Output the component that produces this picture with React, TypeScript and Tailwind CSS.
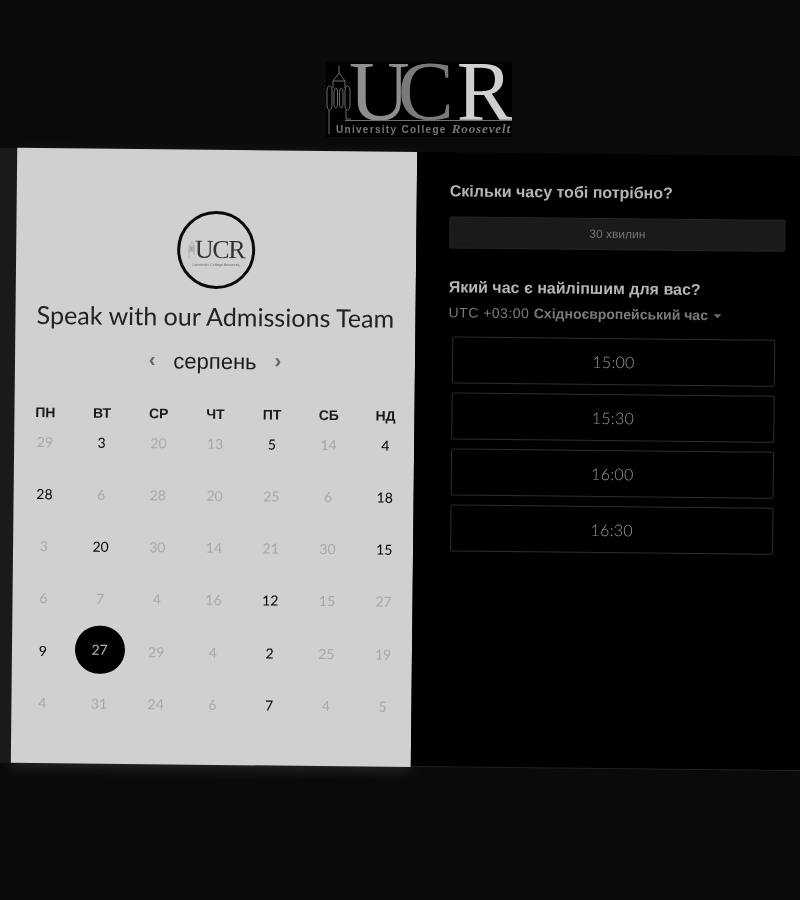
const weekDays = ['ПН', 'ВТ', 'СР', 'ЧТ', 'ПТ', 'СБ', 'НД'];

// [day, available]
const days: [number, boolean][][] = [
  [[29, false], [3, true], [20, false], [13, false], [5, true], [14, false], [4, true]],
  [[28, true], [6, false], [28, false], [20, false], [25, false], [6, false], [18, true]],
  [[3, false], [20, true], [30, false], [14, false], [21, false], [30, false], [15, true]],
  [[6, false], [7, false], [4, false], [16, false], [12, true], [15, false], [27, false]],
  [[9, true], [27, true], [29, false], [4, false], [2, true], [25, false], [19, false]],
  [[4, false], [31, false], [24, false], [6, false], [7, true], [4, false], [5, false]],
];

const slots = ['15:00', '15:30', '16:00', '16:30'];

function Tower({ className }: { className?: string }) {
  return (
    <svg viewBox="0 0 25 71" fill="none" stroke="currentColor" strokeWidth="1" className={className}>
      <path d="M13 2v7M13 9l-6 8v7M13 9l6 8v7M7 17h12" />
      <path d="M3.5 22C1.5 22 1 25 1 27v14c0 3 1 5 2.500 5S6 44 6 41V27c0-2-.5-5-2.500-5z" />
      <path d="M9.800 24C8.300 24 8 27 8 29v11c0 2 .8 4 1.800 4s1.700-2 1.700-4V29c0-2-.2-5-1.700-5z" />
      <path d="M15.200 24c-1.500 0-1.700 3-1.700 5v11c0 2 .7 4 1.700 4s1.800-2 1.800-4V29c0-2-.3-5-1.800-5z" />
      <path d="M21.500 22c-2 0-2.500 3-2.500 5v14c0 3 1 5 2.500 5s2.500-2 2.500-5V27c0-2-.5-5-2.500-5z" />
      <path d="M3 46v24M20 46v9h5" />
    </svg>
  );
}

function HeaderLogo() {
  return (
    <div className="relative w-[186px] h-[75px] bg-black overflow-hidden">
      <Tower className="absolute left-0 top-[2px] w-[25px] h-[71px] text-[#6f6f6f]" />
      <div className="absolute left-[23px] top-0 flex text-[84px] leading-[60px] font-['Liberation_Serif',serif]">
        <span className="text-[#8e8e8e]">U</span>
        <span className="ml-[-12px] text-[#7a7a7a]">C</span>
        <span className="ml-[3px] text-[#d0d0d0]">R</span>
      </div>
      <div className="absolute left-[19px] top-[58px] w-[167px] h-px bg-[#6f6f6f]" />
      <div className="absolute left-[10px] top-[60px] flex items-baseline gap-[5px] whitespace-nowrap text-[#777]">
        <span className="text-[10px] leading-[14px] font-bold tracking-[1.3px] font-['Liberation_Sans',sans-serif]">University College</span>
        <span className="text-[13px] leading-[14px] font-bold italic tracking-[0.9px] font-['Liberation_Serif',serif]">Roosevelt</span>
      </div>
    </div>
  );
}

function BadgeLogo() {
  return (
    <div className="flex flex-col items-center justify-center w-[78px] h-[78px] rounded-full border-[3px] border-[#0a0a0a]">
      <div className="flex items-end mt-[4px]">
        <Tower className="w-[7px] h-[19px] mb-[3px] text-[#666]" />
        <span className="text-[26px] leading-[24px] tracking-[-0.05em] text-[#333] font-['Liberation_Serif',serif]">UCR</span>
      </div>
      <span className="text-[4px] leading-[5px] whitespace-nowrap text-[#555] font-['Liberation_Serif',serif]">University College Roosevelt</span>
    </div>
  );
}

function CalendarPanel() {
  return (
    <div className="w-[400px] shrink-0 bg-[#d0d0d0] pt-[61px] flex flex-col items-center shadow-[-20px_0_0_#1a1a1a,0_4px_14px_rgba(255,255,255,0.12)] font-['Lato','Liberation_Sans',sans-serif]">
      <BadgeLogo />
      <h1 className="mt-[11px] text-[25px] leading-[32px] text-[#222] tracking-[0.05px] whitespace-nowrap">Speak with our Admissions Team</h1>
      <div className="mt-[15px] flex items-center gap-[18px] h-[28px] font-['Liberation_Sans',sans-serif]">
        <span className="text-[#666] text-[20px] font-bold leading-none mb-[3px]">‹</span>
        <span className="text-[22px] text-[#1a1a1a]">серпень</span>
        <span className="text-[#666] text-[20px] font-bold leading-none mb-[3px]">›</span>
      </div>
      <div className="mt-[27px] ml-[2.5px] self-start w-[397px] grid grid-cols-7 font-['Liberation_Sans',sans-serif]">
        {weekDays.map(d => (
          <div key={d} className="h-[24px] flex items-center justify-center text-[14px] font-bold text-[#1a1a1a]">{d}</div>
        ))}
      </div>
      <div className="ml-[2.5px] self-start w-[397px] grid grid-cols-7 auto-rows-[52.3px] mt-[5px]">
        {days.flat().map(([day, available], i) => (
          <div key={i} className="h-[24px] relative flex items-center justify-center text-[14px]">
            {i === 29 ? (
              <span className="absolute left-1/2 top-[11px] -translate-x-1/2 -translate-y-1/2 w-[50px] h-[48px] rounded-full bg-black text-[#b5b5b5] pb-[1px] flex items-center justify-center">{day}</span>
            ) : (
              <span className={available ? 'text-black' : 'text-[#a8a8a8]'}>{day}</span>
            )}
          </div>
        ))}
      </div>
    </div>
  );
}

function BookingPanel() {
  return (
    <div className="flex-1 bg-black border-b border-[#222] pl-[33px] pt-[29px] font-['Liberation_Sans',sans-serif]">
      <h2 className="text-[16px] leading-[20px] font-bold text-[#b5b5b5]">Скільки часу тобі потрібно?</h2>
      <div className="mt-[15px] w-[336px] h-[32px] rounded-[2px] border border-[#262626] bg-[#1a1a1a] flex items-center justify-center text-[12px] text-[#747474]">30 хвилин</div>
      <h2 className="mt-[29px] text-[16px] leading-[20px] font-bold text-[#b5b5b5]">Який час є найліпшим для вас?</h2>
      <div className="mt-[5px] flex items-center text-[14px] leading-[20px] text-[#7a7a7a]">
        <span className="tracking-[0.5px]">UTC +03:00&nbsp;</span>
        <span className="font-bold">Східноєвропейський час</span>
        <span className="ml-[6px] mt-[2px] w-0 h-0 border-x-[4px] border-x-transparent border-t-[4px] border-t-[#6a6a6a]" />
      </div>
      <div className="mt-[14px] ml-[4px] w-[323px] flex flex-col gap-[9px]">
        {slots.map(s => (
          <button key={s} className="h-[47px] rounded-[2px] border border-[#2e2e2e] bg-black text-[16px] font-light tracking-[0.3px] text-[#999] font-['Lato',sans-serif]">{s}</button>
        ))}
      </div>
    </div>
  );
}

export default function App() {
  return (
    <div className="w-[800px] h-[900px] overflow-hidden bg-[#0a0a0a] blur-[0.35px]">
      <header className="h-[152px] pt-[62px] pl-[326px]">
        <HeaderLogo />
      </header>
      <main className="ml-[14px] w-[800px] h-[615px] flex rotate-[0.6deg]">
        <CalendarPanel />
        <BookingPanel />
      </main>
    </div>
  );
}
